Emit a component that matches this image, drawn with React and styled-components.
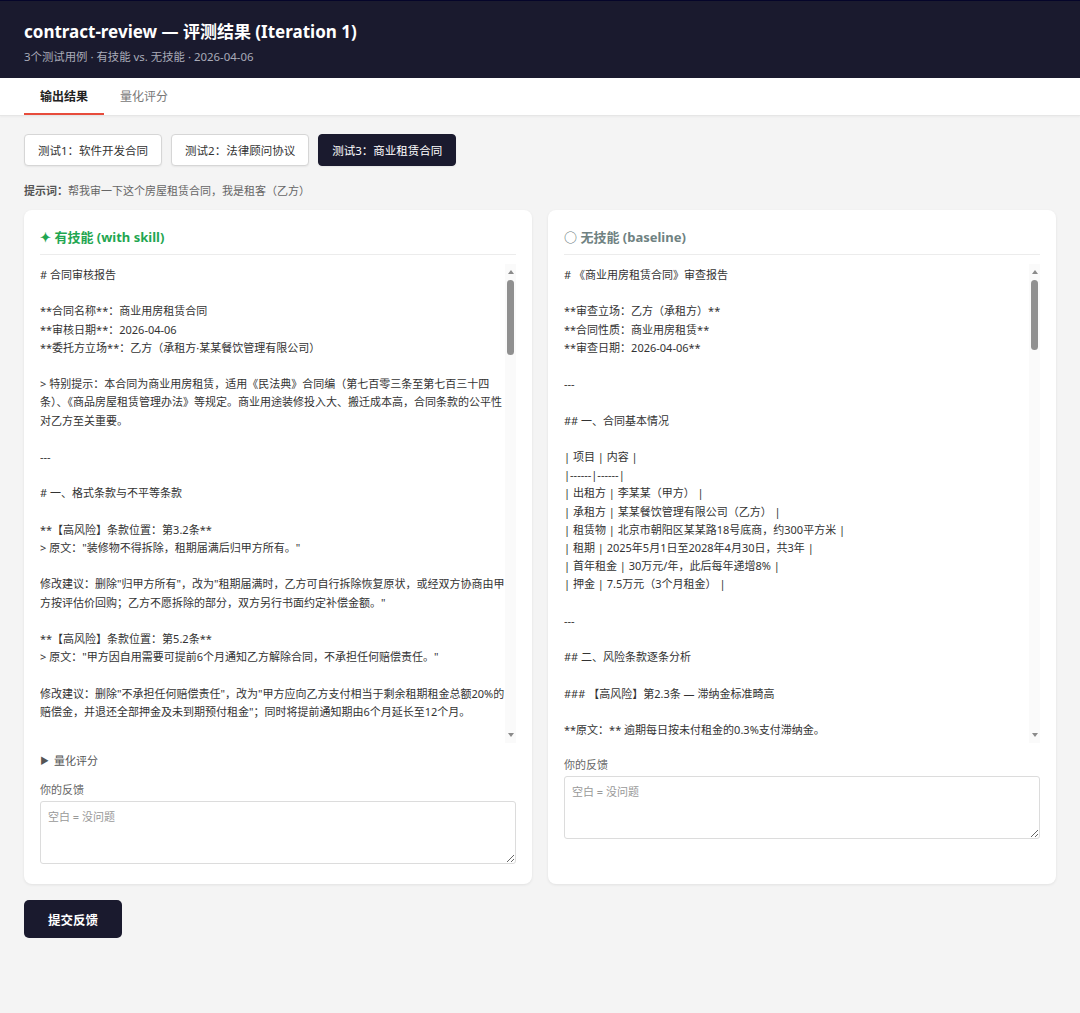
import styled, { createGlobalStyle } from "styled-components";

const GlobalStyle = createGlobalStyle`
  * { box-sizing: border-box; }
  body {
    margin: 0;
    background: #f4f4f4;
    font-family: "Noto Sans", "Noto Sans CJK SC", sans-serif;
    color: #333;
  }
`;

const Header = styled.header`
  background: #1a1a2e;
  border-top: 1px solid #05052a;
  height: 78px;
  padding: 20px 24px 0;
`;

const Title = styled.h1`
  margin: 0;
  color: #fff;
  font-size: 17px;
  font-weight: 700;
  line-height: 22px;
`;

const Subtitle = styled.div`
  margin-top: 5px;
  color: #a9abb8;
  font-size: 11.4px;
`;

const TabBar = styled.nav`
  display: flex;
  background: #fff;
  height: 38px;
  padding: 0 24px;
  border-bottom: 1px solid #e6e6e6;
  box-shadow: 0 1px 2px rgba(0, 0, 0, 0.04);
`;

const Tab = styled.div`
  display: flex;
  align-items: center;
  padding: 1px 16px 0;
  font-size: 12px;
  font-weight: ${(p) => (p.$active ? 700 : 400)};
  color: ${(p) => (p.$active ? "#222" : "#777")};
  border-bottom: 2px solid ${(p) => (p.$active ? "#e74c3c" : "transparent")};
`;

const Main = styled.main`
  padding: 18px 24px 40px;
`;

const CaseRow = styled.div`
  display: flex;
  gap: 9px;
`;

const CaseButton = styled.button`
  height: 32px;
  padding: 0 13px;
  font-family: inherit;
  font-size: 11.5px;
  border-radius: 4px;
  border: 1px solid ${(p) => (p.$active ? "#1a1a2e" : "#d6d6d6")};
  background: ${(p) => (p.$active ? "#1a1a2e" : "#fff")};
  color: ${(p) => (p.$active ? "#fff" : "#333")};
  box-shadow: 0 1px 2px rgba(0, 0, 0, 0.06);
`;

const Prompt = styled.div`
  margin-top: 17px;
  font-size: 11px;
  color: #666;
  line-height: 16px;

  b {
    color: #555;
  }
`;

const Columns = styled.div`
  display: grid;
  grid-template-columns: 1fr 1fr;
  gap: 16px;
  margin-top: 11px;
`;

const Card = styled.section`
  background: #fff;
  border-radius: 8px;
  box-shadow: 0 1px 3px rgba(0, 0, 0, 0.08);
  padding: 17px 16px 20px;
  display: flex;
  flex-direction: column;
`;

const CardTitle = styled.h2`
  margin: 0;
  padding-bottom: 7px;
  border-bottom: 1px solid #ececec;
  font-size: 13px;
  font-weight: 700;
  line-height: 20px;
  color: ${(p) => p.$color};
`;

const OutputFrame = styled.div`
  margin-top: 9px;
  height: 479px;
  display: flex;
`;

const OutputText = styled.div`
  flex: 1;
  min-width: 0;
  align-self: flex-start;
  height: 472px;
  overflow: hidden;
  white-space: pre-wrap;
  font-size: 11px;
  line-height: 18.2px;
  color: #333;
  padding-top: 2px;
`;

const ScrollTrack = styled.div`
  width: 11px;
  flex-shrink: 0;
  background: #fafafa;
  display: flex;
  flex-direction: column;
  align-items: center;
  padding: 6px 0 6px;
`;

const Arrow = styled.div`
  width: 0;
  height: 0;
  border-left: 3.5px solid transparent;
  border-right: 3.5px solid transparent;
  ${(p) =>
    p.$down
      ? "border-top: 4px solid #8a8a8a; margin-top: auto;"
      : "border-bottom: 4px solid #8a8a8a;"}
`;

const Thumb = styled.div`
  margin-top: 6px;
  width: 7px;
  height: ${(p) => p.$size}px;
  border-radius: 4px;
  background: #909090;
`;

const Summary = styled.div`
  margin-top: 10px;
  font-size: 11px;
  color: #555;
  line-height: 16px;
  display: flex;
  align-items: center;
  gap: 5px;

  span {
    font-size: 9px;
  }
`;

const FeedbackLabel = styled.label`
  display: block;
  margin-top: ${(p) => p.$gap}px;
  font-size: 11px;
  color: #666;
  line-height: 16px;
`;

const Feedback = styled.textarea`
  display: block;
  margin-top: 3px;
  width: 100%;
  height: 63px;
  padding: 6px 7px;
  font-family: inherit;
  font-size: 11px;
  border: 1px solid #dcdcdc;
  border-radius: 3px;
  resize: vertical;
  color: #333;

  &::placeholder {
    color: #999;
  }
`;

const SubmitButton = styled.button`
  margin-top: 16px;
  height: 38px;
  padding: 0 24px;
  border: none;
  border-radius: 5px;
  background: #1a1a2e;
  color: #fff;
  font-family: inherit;
  font-size: 12.5px;
  font-weight: 700;
`;

const withSkill = `# 合同审核报告

**合同名称**：商业用房租赁合同
**审核日期**：2026-04-06
**委托方立场**：乙方（承租方·某某餐饮管理有限公司）

> 特别提示：本合同为商业用房租赁，适用《民法典》合同编（第七百零三条至第七百三十四条）、《商品房屋租赁管理办法》等规定。商业用途装修投入大、搬迁成本高，合同条款的公平性对乙方至关重要。

---

# 一、格式条款与不平等条款

**【高风险】条款位置：第3.2条**
> 原文："装修物不得拆除，租期届满后归甲方所有。"

修改建议：删除"归甲方所有"，改为"租期届满时，乙方可自行拆除恢复原状，或经双方协商由甲方按评估价回购；乙方不愿拆除的部分，双方另行书面约定补偿金额。"

**【高风险】条款位置：第5.2条**
> 原文："甲方因自用需要可提前6个月通知乙方解除合同，不承担任何赔偿责任。"

修改建议：删除"不承担任何赔偿责任"，改为"甲方应向乙方支付相当于剩余租期租金总额20%的赔偿金，并退还全部押金及未到期预付租金"；同时将提前通知期由6个月延长至12个月。

**【高风险】条款位置：第2.3条**
> 原文："乙方逾期支付租金的，每日按未付租金的0.3%支付滞纳金。"

修改建议：日0.3%折合年化约109.5%，明显过高，可能被法院依《民法典》第585条调减。建议改为"每日按未付租金的0.05%支付违约金，累计不超过当期应付租金的20%"。
`;

const baseline = `# 《商业用房租赁合同》审查报告

**审查立场：乙方（承租方）**
**合同性质：商业用房租赁**
**审查日期：2026-04-06**

---

## 一、合同基本情况

| 项目 | 内容 |
|------|------|
| 出租方 | 李某某（甲方） |
| 承租方 | 某某餐饮管理有限公司（乙方） |
| 租赁物 | 北京市朝阳区某某路18号底商，约300平方米 |
| 租期 | 2025年5月1日至2028年4月30日，共3年 |
| 首年租金 | 30万元/年，此后每年递增8% |
| 押金 | 7.5万元（3个月租金） |

---

## 二、风险条款逐条分析

### 【高风险】第2.3条 — 滞纳金标准畸高

**原文：** 逾期每日按未付租金的0.3%支付滞纳金。

**问题：** 折合年化利率约109.5%，远超法律保护的合理范围。
`;

function Output({ text, thumb }) {
  return (
    <OutputFrame>
      <OutputText>{text}</OutputText>
      <ScrollTrack>
        <Arrow />
        <Thumb $size={thumb} />
        <Arrow $down />
      </ScrollTrack>
    </OutputFrame>
  );
}

export default function App() {
  return (
    <>
      <GlobalStyle />
      <Header>
        <Title>contract-review — 评测结果 (Iteration 1)</Title>
        <Subtitle>3个测试用例 · 有技能 vs. 无技能 · 2026-04-06</Subtitle>
      </Header>
      <TabBar>
        <Tab $active>输出结果</Tab>
        <Tab>量化评分</Tab>
      </TabBar>
      <Main>
        <CaseRow>
          <CaseButton>测试1：软件开发合同</CaseButton>
          <CaseButton>测试2：法律顾问协议</CaseButton>
          <CaseButton $active>测试3：商业租赁合同</CaseButton>
        </CaseRow>
        <Prompt>
          <b>提示词：</b>帮我审一下这个房屋租赁合同，我是租客（乙方）
        </Prompt>
        <Columns>
          <Card>
            <CardTitle $color="#1fa651">✦ 有技能 (with skill)</CardTitle>
            <Output text={withSkill} thumb={75} />
            <Summary>
              <span>▶</span>量化评分
            </Summary>
            <FeedbackLabel $gap={13}>你的反馈</FeedbackLabel>
            <Feedback placeholder="空白 = 没问题" />
          </Card>
          <Card>
            <CardTitle $color="#6f8282">○ 无技能 (baseline)</CardTitle>
            <Output text={baseline} thumb={70} />
            <FeedbackLabel $gap={14}>你的反馈</FeedbackLabel>
            <Feedback placeholder="空白 = 没问题" />
          </Card>
        </Columns>
        <SubmitButton>提交反馈</SubmitButton>
      </Main>
    </>
  );
}
